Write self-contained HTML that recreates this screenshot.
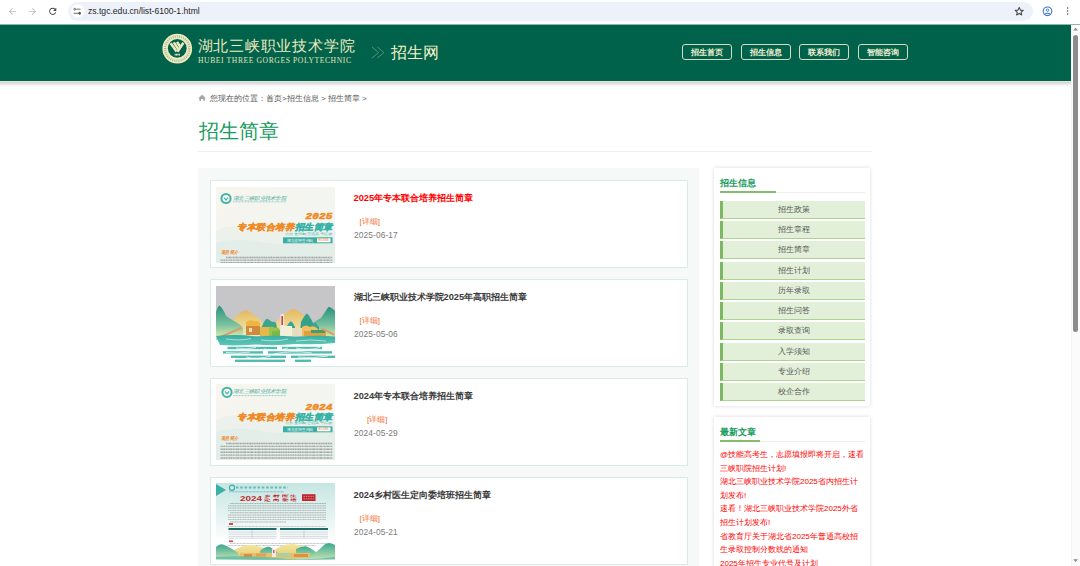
<!DOCTYPE html>
<html><head><meta charset="utf-8">
<style>
*{margin:0;padding:0;box-sizing:border-box}
html,body{width:1080px;height:566px;overflow:hidden;background:#fff;font-family:"Liberation Sans",sans-serif}
.a{position:absolute}
/* chrome */
#bar{left:0;top:0;width:1080px;height:25px;background:#fff;border-bottom:1px solid #8fb5a9}
#pill{left:68px;top:2px;width:965px;height:19px;border-radius:10px;background:#edf1f9}
#url{left:88px;top:6px;font-size:8.6px;color:#1f1f1f;letter-spacing:0}
/* header */
#hdr{left:0;top:25px;width:1071px;height:56px;background:#00624a}
#shadow{left:0;top:81px;width:1071px;height:7px;background:linear-gradient(#e6e1e1 0px,#e6e1e1 1px,#d9d9d9 1.5px,#e0e0e0 2.5px,#ececec 3.5px,#f6f6f6 4.5px,#fcfcfc 5.5px,#fff 7px)}
.nav{top:44px;width:50px;height:16px;border:1px solid #d6dcc0;border-radius:3px;color:#f2f0d4;font-size:8px;font-weight:bold;text-align:center;line-height:15.5px}
#cal{left:197.5px;top:36px;font-size:14.6px;letter-spacing:0.8px;color:#eeeac0;white-space:nowrap;line-height:20px}
#eng{left:198px;top:57px;font-family:"Liberation Serif",serif;font-size:7.6px;font-weight:normal;letter-spacing:0.6px;color:#e4e2bc;white-space:nowrap;line-height:8px}
#zsw{left:391px;top:42px;font-size:16px;color:#f5f2c8;white-space:nowrap;line-height:22px}
/* scrollbar */
#track{left:1071px;top:25px;width:9px;height:541px;background:#fbfbfb;border-left:1px solid #f3f3f3}
#thumb{left:1073px;top:35px;width:5px;height:297px;border-radius:3px;background:#8c8c8c}
/* content */
#crumb{left:210px;top:93px;font-size:8px;color:#555;white-space:nowrap}
#title{left:198.5px;top:117.5px;font-size:20px;font-weight:500;color:#169b5c;white-space:nowrap}
#tline{left:198px;top:151px;width:674px;height:1px;background:#eee}
#main{left:198px;top:168px;width:500.5px;height:420px;background:#f7f9f8}
.card{left:210px;width:478px;height:88px;background:#fff;border:1px solid #d9ebe5}
.thumb{left:216px;width:119px;height:76px;overflow:hidden}
.ttl{left:353.5px;font-size:9.25px;font-weight:bold;color:#3a3a3a;white-space:nowrap}
.more{left:359.5px;font-size:8px;color:#f36b1f;white-space:nowrap}
.date{left:354px;font-size:8.4px;color:#7a7a7a;letter-spacing:0.1px;white-space:nowrap}
#side1{left:713.5px;top:168px;width:156.7px;height:238px;background:#fff;box-shadow:0 0 4px rgba(0,0,0,.15)}
#side2{left:713.5px;top:417px;width:156.7px;height:200px;background:#fff;box-shadow:0 0 4px rgba(0,0,0,.15)}
.sh{left:720px;font-size:9px;font-weight:bold;color:#169b5c;white-space:nowrap}
.sul{left:720px;width:145px;height:1px;background:#eee}
.sgr{left:720px;height:1.6px;background:#84be6a}
.mi{left:720px;width:144.5px;height:18px;background:#e2f0d9;border-left:3px solid #7cb862;border-bottom:1px solid #acd296;font-size:8px;color:#555;text-align:center;line-height:18px}
.news{left:720px;white-space:nowrap;font-size:8px;line-height:13.6px;color:#f00}
</style></head><body>
<div class="a" id="bar"></div>
<div class="a" id="pill"></div>
<div class="a" id="url">zs.tgc.edu.cn/list-6100-1.html</div>
<svg class="a" style="left:0;top:0" width="100" height="24" viewBox="0 0 100 24">
 <path transform="translate(7 6.1) scale(0.444)" d="M20 11H7.83l5.59-5.59L12 4l-8 8 8 8 1.41-1.41L7.83 13H20v-2z" fill="#bdbdbd"/>
 <path transform="translate(27.1 6.1) scale(0.444)" d="M12 4l-1.41 1.41L16.17 11H4v2h12.17l-5.58 5.59L12 20l8-8z" fill="#bdbdbd"/>
 <path transform="translate(47.4 6) scale(0.444)" d="M17.65 6.35A7.958 7.958 0 0 0 12 4c-4.42 0-7.99 3.58-7.99 8s3.57 8 7.99 8c3.73 0 6.84-2.55 7.73-6h-2.08A5.99 5.99 0 0 1 12 18c-3.31 0-6-2.690-6-6s2.69-6 6-6c1.66 0 3.14.69 4.22 1.78L13 11h7V4l-2.350 2.35z" fill="#474747"/>
 <circle cx="77.8" cy="10.9" r="6.6" fill="#fff"/>
 <g stroke="#474747" stroke-width="0.8" fill="none">
  <circle cx="74.7" cy="9.2" r="0.9"/><path d="M76.3 9.2H80.5"/>
  <circle cx="79.6" cy="13.3" r="1" fill="#474747"/><path d="M73.6 13.3H78.2"/>
 </g>
</svg>
<svg class="a" style="left:1005px;top:0" width="75" height="24" viewBox="1005 0 75 24">
 <path d="M1019.2 7.4L1020.4 10.1L1023.2 10.4L1021.1 12.3L1021.7 15L1019.2 13.6L1016.7 15L1017.3 12.3L1015.2 10.4L1018 10.1Z" fill="none" stroke="#474747" stroke-width="1.1" stroke-linejoin="round"/>
 <circle cx="1047.5" cy="11.3" r="4.3" fill="none" stroke="#3b74db" stroke-width="1.1"/>
 <circle cx="1047.5" cy="10.2" r="1.2" fill="none" stroke="#3b74db" stroke-width="0.9"/>
 <path d="M1044.6 14.2Q1047.5 12.4 1050.4 14.2" fill="none" stroke="#3b74db" stroke-width="1.1"/>
 <g fill="#474747"><circle cx="1067.6" cy="8" r="0.75"/><circle cx="1067.6" cy="11" r="0.75"/><circle cx="1067.6" cy="14.1" r="0.75"/></g>
</svg>

<div class="a" id="hdr"></div>
<div class="a" id="shadow"></div>
<svg class="a" style="left:160px;top:32px" width="36" height="34" viewBox="160 32 36 34">
 <circle cx="177.25" cy="48.65" r="14.85" fill="#eeeac0"/>
 <circle cx="177.25" cy="48.65" r="12.2" fill="none" stroke="#3a7f5e" stroke-width="2" stroke-dasharray="1 1.1" opacity="0.45"/>
 <circle cx="177.25" cy="48.3" r="9.4" fill="#00624a"/>
 <g stroke="#eeeac0" stroke-width="2.5" stroke-linecap="butt">
  <path d="M170.6 43.2L176.6 51.6"/>
  <path d="M173.8 42.4L178.4 49.4"/>
  <path d="M177 42L180.2 46.8"/>
  <path d="M183.4 42.8L177.4 51.8"/>
 </g>
 <path d="M174.6 54.6H180" stroke="#eeeac0" stroke-width="1.8" stroke-dasharray="1.1 0.3"/>
</svg>
<div class="a" id="cal">湖北三峡职业技术学院</div>
<div class="a" id="eng">HUBEI THREE GORGES POLYTECHNIC</div>
<svg class="a" style="left:370px;top:45px" width="16" height="15" viewBox="370 45 16 15">
 <path d="M372 47L378.6 52.5L372 58M377.3 47L383.9 52.5L377.3 58" fill="none" stroke="#5e977b" stroke-width="0.9"/>
</svg>
<div class="a" id="zsw">招生网</div>

<div class="a nav" style="left:682px">招生首页</div>
<div class="a nav" style="left:741px">招生信息</div>
<div class="a nav" style="left:799px">联系我们</div>
<div class="a nav" style="left:858px">智能咨询</div>

<div class="a" id="track"></div>
<div class="a" id="thumb"></div>
<svg class="a" style="left:1071px;top:25px" width="9" height="541" viewBox="1071 25 9 541"><path d="M1073.2 30.6L1075.6 27.8L1078 30.6Z" fill="#8a8a8a"/><path d="M1073.2 559.2L1075.6 562L1078 559.2Z" fill="#8a8a8a"/></svg>

<svg class="a" style="left:197px;top:93px" width="10" height="9" viewBox="197 93 10 9"><path d="M199.3 97.8L202.1 95.4L204.9 97.8V100.7H203.2V99H201V100.7H199.3Z" fill="#a3a3a3"/><path d="M198.6 98.1L202.1 95L205.6 98.1" fill="none" stroke="#a3a3a3" stroke-width="0.8"/></svg>
<div class="a" id="crumb">您现在的位置：首页&gt;招生信息 &gt; 招生简章 &gt;</div>
<div class="a" id="title">招生简章</div>
<div class="a" id="tline"></div>
<div class="a" id="main"></div>

<div class="a card" style="top:180px"></div>
<div class="a card" style="top:279px"></div>
<div class="a card" style="top:378px"></div>
<div class="a card" style="top:477px"></div>

<!--THUMBS-->
<svg class="a" style="left:216px;top:187px" width="119" height="76" viewBox="0 0 119 76"><defs><linearGradient id="bg2025" x1="0" y1="0" x2="1" y2="1"><stop offset="0" stop-color="#f7f5ee"/><stop offset="1" stop-color="#f0f5f1"/></linearGradient></defs>
<rect width="119" height="76" fill="url(#bg2025)"/>
<path d="M0 44 Q15 36 30 42 T60 40 T95 43 T119 38 V76 H0Z" fill="#e8efea" opacity="0.7"/>
<path d="M0 56 Q20 50 45 55 T90 52 T119 55 V76 H0Z" fill="#e4eee9"/>
<circle cx="10" cy="11.5" r="4.6" fill="none" stroke="#44b5aa" stroke-width="2"/>
<path d="M8 10.5L10 13.0L12 10.5" fill="none" stroke="#44b5aa" stroke-width="1.2"/>
<text x="17" y="12.6" font-size="5.2" fill="#3fa89c" font-family="Liberation Serif" font-style="italic" textLength="53" lengthAdjust="spacingAndGlyphs">湖北三峡职业技术学院</text>
<path d="M17 14.8H70" stroke="#7cc5bc" stroke-width="0.8" stroke-dasharray="1 0.5"/>
<text x="116.5" y="32.0" font-size="9.5" font-weight="bold" fill="#f08a24" stroke="#f08a24" stroke-width="0.5" text-anchor="end" font-family="Liberation Mono" font-style="italic" textLength="27" lengthAdjust="spacingAndGlyphs">2025</text>
<text x="21" y="43" font-size="8.6" font-weight="bold" fill="#f08a24" stroke="#f08a24" stroke-width="0.45" font-style="italic" textLength="57" lengthAdjust="spacingAndGlyphs">专本联合培养</text>
<text x="78.5" y="43" font-size="8.6" font-weight="bold" fill="#3ab3a7" stroke="#3ab3a7" stroke-width="0.45" font-style="italic" textLength="38" lengthAdjust="spacingAndGlyphs">招生简章</text>
<text x="69" y="48.2" font-size="3.4" fill="#3ab3a7" textLength="47.5" lengthAdjust="spacingAndGlyphs">公办全日制普通高等院校</text>
<rect x="67" y="50.3" width="49.5" height="6" fill="#3aaea3"/>
<text x="71" y="54.6" font-size="3.6" fill="#fff" textLength="26" lengthAdjust="spacingAndGlyphs">湖北省招生代码</text>
<rect x="101" y="51.3" width="13.5" height="4" fill="#fff"/>
<text x="102.5" y="54.4" font-size="3" fill="#e8831c" textLength="10" lengthAdjust="spacingAndGlyphs">E5388</text>
<text x="5" y="67.0" font-size="4.8" font-weight="bold" fill="#ef8424" font-style="italic" textLength="17.5" lengthAdjust="spacingAndGlyphs">项目简介</text>
<path d="M10 70.5H116.5" stroke="#666" stroke-width="1.4" stroke-dasharray="1.3 0.4 0.9 0.3 2 0.5 1.1 0.4" opacity="0.55"/><path d="M4.5 73.1H116.5" stroke="#666" stroke-width="1.4" stroke-dasharray="1.3 0.4 0.9 0.3 2 0.5 1.1 0.4" opacity="0.55"/><path d="M4.5 75.7H116.5" stroke="#666" stroke-width="1.4" stroke-dasharray="1.3 0.4 0.9 0.3 2 0.5 1.1 0.4" opacity="0.55"/></svg>
<svg class="a" style="left:216px;top:286px" width="119" height="76" viewBox="0 0 119 76"><rect width="119" height="76" fill="#fff"/>
<rect width="119" height="54" fill="#c6c5c8"/>
<defs>
<linearGradient id="mtY" x1="0" y1="0" x2="0" y2="1"><stop offset="0" stop-color="#e6b85a"/><stop offset="1" stop-color="#f0eec0"/></linearGradient>
<linearGradient id="mtG" x1="0" y1="0" x2="0" y2="1"><stop offset="0" stop-color="#27917f"/><stop offset="0.6" stop-color="#7cc3a0"/><stop offset="1" stop-color="#e4eca8"/></linearGradient>
<linearGradient id="wat" x1="0" y1="0" x2="0" y2="1"><stop offset="0" stop-color="#36ada3"/><stop offset="1" stop-color="#62c6b6"/></linearGradient>
</defs>
<path d="M14 38 Q22 26 30 23.9 Q38 27 48 38 V50 H14Z" fill="url(#mtY)"/>
<path d="M60 36 Q70 25 77.8 23 Q86 26 95 36 V50 H60Z" fill="url(#mtY)"/>
<path d="M0 26 Q2 19.5 3.5 19.4 Q7 22 10 30 Q16 34 20 36 Q24 38 27 42 V52 H0Z" fill="url(#mtG)"/>
<path d="M119 25 Q114 20 112.2 21.2 Q109 26 105 32 Q101 34 97 37 Q94 40 92 44 V52 H119Z" fill="url(#mtG)"/>
<path d="M46 40 Q49 33 51.3 32.7 Q54 34 56 36 Q58 35 60 37 L62 46 H44Z" fill="#3da58c"/>
<path d="M71 40 Q74 35 75 35.4 Q77 36 79 41 V46 H70Z" fill="#3da58c"/>
<path d="M85 36 Q89 28 91 27.4 Q94 30 97 37 V46 H84Z" fill="#35a08a"/>
<path d="M96 40 Q98 36 99 36.2 Q101 38 103 41 V46 H95Z" fill="#3da58c"/>
<path d="M30 36 Q34 33 38 35 Q42 34 44 37 V44 H30Z" fill="#f0b440"/>
<rect x="30" y="40" width="14" height="9" fill="#d08a40"/>
<rect x="33" y="42" width="3" height="4" fill="#f4e0b0"/>
<rect x="44" y="41" width="10" height="9" fill="#e3b84c"/>
<path d="M53 42 Q56 39 59 42 Q62 40 64 44 V50 H53Z" fill="#9cc24a"/>
<rect x="56" y="45" width="8" height="5" fill="#7ab84a"/>
<rect x="64.5" y="28.3" width="3.5" height="21" fill="#f0eeea"/>
<rect x="65.4" y="30" width="1.6" height="9" fill="#d23c3c"/>
<rect x="68" y="40" width="8" height="10" fill="#f3f0d8"/>
<rect x="76" y="42" width="12" height="8" fill="#e6dcc0"/>
<path d="M86 41 Q90 38 94 41 Q98 39 102 43 V50 H86Z" fill="#f0c060"/>
<rect x="88" y="45" width="22" height="5" fill="#e0a040"/>
<rect x="95" y="44" width="14" height="3" fill="#3da070"/>
<path d="M1 51.3 L25.6 40.7 L26.8 42.4 L2 53Z" fill="#e09a68"/>
<path d="M118.4 47.7 L106 41.5 L104.8 43 L118.4 50Z" fill="#e09a68"/>
<path d="M0 50 Q20 48 40 50.5 Q60 49 80 51 Q100 49 119 50.5 V57 Q100 59 80 58 Q60 60 40 58.5 Q20 60 4 59Z" fill="url(#wat)"/>
<path d="M10 53 Q25 55 35 52.5 M45 54 Q60 56 72 53 M80 55 Q95 53 110 55" stroke="#e8f6f0" stroke-width="0.6" fill="none"/>
<g fill="#52bcae">
<rect x="11.5" y="60.8" width="49.5" height="2.4"/><rect x="66" y="60.8" width="40" height="2.4"/>
<rect x="7" y="65.2" width="40" height="2.4"/><rect x="52" y="65.2" width="64" height="2.4"/>
<rect x="15" y="69.6" width="55" height="2.4"/><rect x="75" y="69.6" width="48" height="2.4"/>
<rect x="19" y="73.6" width="50" height="2.4"/><rect x="79" y="73.6" width="16" height="2.4"/>
</g>
<path d="M48 63 Q60 66 72 62 M58 68 Q75 64 96 67 M30 71 Q40 74 55 70 M20 62 Q30 64 40 61.5 M80 62 Q92 65 104 61.5 M10 66.5 Q22 68 34 66 M82 71 Q96 73 112 70" stroke="#fff" stroke-width="0.7" fill="none"/>
</svg>
<svg class="a" style="left:216px;top:384px" width="119" height="76" viewBox="0 0 119 76"><defs><linearGradient id="bg2024" x1="0" y1="0" x2="1" y2="1"><stop offset="0" stop-color="#f7f5ee"/><stop offset="1" stop-color="#f0f5f1"/></linearGradient></defs>
<rect width="119" height="76" fill="url(#bg2024)"/>
<path d="M0 36 Q15 28 30 34 T60 32 T95 35 T119 30 V76 H0Z" fill="#e8efea" opacity="0.7"/>
<path d="M0 48 Q20 42 45 47 T90 44 T119 47 V76 H0Z" fill="#e4eee9"/>
<circle cx="11" cy="8.3" r="4.6" fill="none" stroke="#44b5aa" stroke-width="2"/>
<path d="M9 7.3L11 9.8L13 7.3" fill="none" stroke="#44b5aa" stroke-width="1.2"/>
<text x="17" y="9.4" font-size="5.2" fill="#3fa89c" font-family="Liberation Serif" font-style="italic" textLength="53" lengthAdjust="spacingAndGlyphs">湖北三峡职业技术学院</text>
<path d="M17 11.6H70" stroke="#7cc5bc" stroke-width="0.8" stroke-dasharray="1 0.5"/>
<text x="116.5" y="25.5" font-size="9.5" font-weight="bold" fill="#f08a24" stroke="#f08a24" stroke-width="0.5" text-anchor="end" font-family="Liberation Mono" font-style="italic" textLength="27" lengthAdjust="spacingAndGlyphs">2024</text>
<text x="21" y="36" font-size="8.6" font-weight="bold" fill="#f08a24" stroke="#f08a24" stroke-width="0.45" font-style="italic" textLength="57" lengthAdjust="spacingAndGlyphs">专本联合培养</text>
<text x="78.5" y="36" font-size="8.6" font-weight="bold" fill="#3ab3a7" stroke="#3ab3a7" stroke-width="0.45" font-style="italic" textLength="38" lengthAdjust="spacingAndGlyphs">招生简章</text>
<text x="69" y="40.2" font-size="3.4" fill="#3ab3a7" textLength="47.5" lengthAdjust="spacingAndGlyphs">公办全日制普通高等院校</text>
<rect x="67" y="42.3" width="49.5" height="6" fill="#3aaea3"/>
<text x="71" y="46.6" font-size="3.6" fill="#fff" textLength="26" lengthAdjust="spacingAndGlyphs">湖北省招生代码</text>
<rect x="101" y="43.3" width="13.5" height="4" fill="#fff"/>
<text x="102.5" y="46.4" font-size="3" fill="#e8831c" textLength="10" lengthAdjust="spacingAndGlyphs">E5388</text>
<text x="5" y="56.0" font-size="4.8" font-weight="bold" fill="#ef8424" font-style="italic" textLength="17.5" lengthAdjust="spacingAndGlyphs">项目简介</text>
<path d="M10 59.5H116.5" stroke="#666" stroke-width="1.4" stroke-dasharray="1.3 0.4 0.9 0.3 2 0.5 1.1 0.4" opacity="0.55"/><path d="M4.5 62.4H116.5" stroke="#666" stroke-width="1.4" stroke-dasharray="1.3 0.4 0.9 0.3 2 0.5 1.1 0.4" opacity="0.55"/><path d="M4.5 65.3H116.5" stroke="#666" stroke-width="1.4" stroke-dasharray="1.3 0.4 0.9 0.3 2 0.5 1.1 0.4" opacity="0.55"/><path d="M4.5 68.2H116.5" stroke="#666" stroke-width="1.4" stroke-dasharray="1.3 0.4 0.9 0.3 2 0.5 1.1 0.4" opacity="0.55"/><path d="M4.5 71.1H116.5" stroke="#666" stroke-width="1.4" stroke-dasharray="1.3 0.4 0.9 0.3 2 0.5 1.1 0.4" opacity="0.55"/><path d="M4.5 74.0H116.5" stroke="#666" stroke-width="1.4" stroke-dasharray="1.3 0.4 0.9 0.3 2 0.5 1.1 0.4" opacity="0.55"/></svg>
<svg class="a" style="left:216px;top:483px" width="119" height="77" viewBox="0 0 119 77"><defs><linearGradient id="pbg" x1="0" y1="0" x2="0" y2="1"><stop offset="0" stop-color="#c6e6e2"/><stop offset="0.55" stop-color="#eef7f5"/><stop offset="0.75" stop-color="#ffffff"/></linearGradient>
<linearGradient id="hill" x1="0" y1="0" x2="0" y2="1"><stop offset="0" stop-color="#5cb89a"/><stop offset="1" stop-color="#e4d68a"/></linearGradient></defs>
<rect width="119" height="77" fill="url(#pbg)"/>
<path d="M0 1 L10 7 L0 13Z" fill="#3bb0a6"/>
<circle cx="16" cy="4.8" r="2.6" fill="none" stroke="#3bb0a6" stroke-width="1.2"/>
<path d="M20 4.5H72" stroke="#3bb0a6" stroke-width="1.8" stroke-dasharray="2.5 1.8" opacity="0.75"/>
<path d="M13 8.8H68" stroke="#5a9ed0" stroke-width="0.7" stroke-dasharray="1 0.4"/>
<text x="24" y="17.6" font-size="7.8" font-weight="bold" fill="#c0262d" textLength="22" lengthAdjust="spacingAndGlyphs">2024</text>
<text x="48" y="13.9" font-size="3.4" font-weight="bold" fill="#c0262d" textLength="33" lengthAdjust="spacingAndGlyphs">乡 村 医 生</text>
<text x="48" y="17.6" font-size="3.4" font-weight="bold" fill="#c0262d" textLength="33" lengthAdjust="spacingAndGlyphs">定 向 委 培</text>
<rect x="86" y="11.2" width="13.5" height="6.8" fill="#c0262d"/>
<path d="M87.5 13.4H98M87.5 15.8H98" stroke="#f3c0c0" stroke-width="0.6" stroke-dasharray="1.5 0.8"/>
<path d="M14 20.5H110" stroke="#777" stroke-width="0.8" stroke-dasharray="1.2 0.3 2 0.4 0.8 0.3" opacity="0.6"/><path d="M12 22.8H110" stroke="#777" stroke-width="0.8" stroke-dasharray="1.2 0.3 2 0.4 0.8 0.3" opacity="0.6"/><path d="M12 25.1H110" stroke="#777" stroke-width="0.8" stroke-dasharray="1.2 0.3 2 0.4 0.8 0.3" opacity="0.6"/><path d="M12 27.4H110" stroke="#777" stroke-width="0.8" stroke-dasharray="1.2 0.3 2 0.4 0.8 0.3" opacity="0.6"/><path d="M14 29.7H110" stroke="#777" stroke-width="0.8" stroke-dasharray="1.2 0.3 2 0.4 0.8 0.3" opacity="0.6"/><path d="M12 32.0H110" stroke="#777" stroke-width="0.8" stroke-dasharray="1.2 0.3 2 0.4 0.8 0.3" opacity="0.6"/><path d="M12 34.3H110" stroke="#777" stroke-width="0.8" stroke-dasharray="1.2 0.3 2 0.4 0.8 0.3" opacity="0.6"/><path d="M12 36.6H110" stroke="#777" stroke-width="0.8" stroke-dasharray="1.2 0.3 2 0.4 0.8 0.3" opacity="0.6"/><path d="M14 38.9H70" stroke="#777" stroke-width="0.8" stroke-dasharray="1.2 0.3 2 0.4 0.8 0.3" opacity="0.6"/><rect x="13" y="40" width="4" height="2" fill="#d04848"/><path d="M12 43.5H110" stroke="#777" stroke-width="0.8" stroke-dasharray="1 0.4" opacity="0.5"/><rect x="12.5" y="45" width="48" height="2" fill="#1f6b68"/>
<rect x="64" y="45" width="48" height="2" fill="#1f6b68"/>
<g stroke="#9ab" stroke-width="0.4" fill="none"><path d="M12.5 49H60.5M12.5 51.2H60.5M12.5 53.4H60.5M12.5 55.2H60.5M64 49H112M64 51.2H112M64 53.4H112M64 55.2H112M36 47V55.2M88 47V55.2"/></g>
<rect x="13" y="57.5" width="4" height="1.6" fill="#d04848"/>
<path d="M14 60.5H110M12 62.5H100" stroke="#777" stroke-width="0.8" stroke-dasharray="1 0.4" opacity="0.55"/>
<defs><linearGradient id="hy" x1="0" y1="0" x2="0" y2="1"><stop offset="0" stop-color="#f2e6a0"/><stop offset="1" stop-color="#e6c86a"/></linearGradient>
<linearGradient id="ht" x1="0" y1="0" x2="0" y2="1"><stop offset="0" stop-color="#3aa890"/><stop offset="1" stop-color="#bfe0b0"/></linearGradient></defs>
<path d="M14 70 Q26 61 36 62 Q46 63 56 68 L56 76 H14Z" fill="url(#hy)"/>
<path d="M54 70 Q66 60 78 61 Q88 63 96 69 V76 H54Z" fill="url(#hy)"/>
<path d="M0 64 Q4 60 8 62 Q14 64 22 70 L24 76 H0Z" fill="url(#ht)"/>
<path d="M44 68 Q50 63 54 64 Q58 66 62 70 V76 H44Z" fill="url(#ht)"/>
<path d="M80 66 Q88 62 92 64 Q96 66 100 69 V76 H80Z" fill="url(#ht)"/>
<path d="M119 62 Q112 58 108 62 Q104 66 98 71 V76 H119Z" fill="url(#ht)"/>
<rect x="24" y="70" width="70" height="5" fill="#e3c070"/>
<rect x="28" y="71" width="8" height="3" fill="#e08a40"/><rect x="40" y="70.5" width="10" height="3" fill="#e6a050"/>
<rect x="56" y="66" width="4" height="8" fill="#f3e8e8"/><rect x="57" y="67" width="1.5" height="3" fill="#d06060"/>
<rect x="62" y="70" width="12" height="4" fill="#a8d0a0"/><rect x="78" y="71" width="14" height="3" fill="#e09040"/>
<path d="M0 74 Q30 72 60 75 T119 74 V76.5 Q60 77.5 0 76.5Z" fill="#5cbaa0" opacity="0.8"/>
</svg>
<!--/THUMBS-->
<div class="a ttl" style="top:192.3px;color:#f00">2025年专本联合培养招生简章</div>
<div class="a more" style="top:216px">[详细]</div>
<div class="a date" style="top:230px">2025-06-17</div>

<div class="a ttl" style="top:291.3px">湖北三峡职业技术学院2025年高职招生简章</div>
<div class="a more" style="top:315px">[详细]</div>
<div class="a date" style="top:329px">2025-05-06</div>

<div class="a ttl" style="top:389.6px">2024年专本联合培养招生简章</div>
<div class="a more" style="top:414px;left:367px">[详细]</div>
<div class="a date" style="top:428px">2024-05-29</div>

<div class="a ttl" style="top:489.3px">2024乡村医生定向委培班招生简章</div>
<div class="a more" style="top:513px">[详细]</div>
<div class="a date" style="top:527px">2024-05-21</div>

<div class="a" id="side1"></div>
<div class="a sh" style="top:176.5px">招生信息</div>
<div class="a sul" style="top:192px"></div>
<div class="a sgr" style="top:191px;width:56px"></div>
<div class="a mi" style="top:200.90px">招生政策</div>
<div class="a mi" style="top:221.15px">招生章程</div>
<div class="a mi" style="top:241.40px">招生简章</div>
<div class="a mi" style="top:261.65px">招生计划</div>
<div class="a mi" style="top:281.90px">历年录取</div>
<div class="a mi" style="top:302.15px">招生问答</div>
<div class="a mi" style="top:322.40px">录取查询</div>
<div class="a mi" style="top:342.65px">入学须知</div>
<div class="a mi" style="top:362.90px">专业介绍</div>
<div class="a mi" style="top:383.15px">校企合作</div>

<div class="a" id="side2"></div>
<div class="a sh" style="top:426px">最新文章</div>
<div class="a sul" style="top:441px"></div>
<div class="a sgr" style="top:440px;width:40px"></div>
<div class="a news" style="top:448px">@技能高考生，志愿填报即将开启，速看<br>三峡职院招生计划!<br>湖北三峡职业技术学院2025省内招生计<br>划发布!<br>速看！湖北三峡职业技术学院2025外省<br>招生计划发布!<br>省教育厅关于湖北省2025年普通高校招<br>生录取控制分数线的通知<br>2025年招生专业代号及计划</div>
</body></html>
